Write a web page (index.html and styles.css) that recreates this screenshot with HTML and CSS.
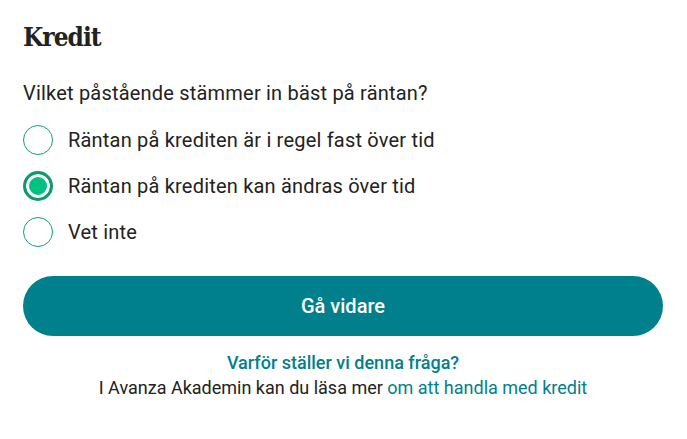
FILE: index.html
```html
<!DOCTYPE html>
<html lang="sv">
<head>
<meta charset="utf-8">
<link rel="stylesheet" href="styles.css">
</head>
<body>
<main class="card">
  <h1 class="title">Kredit</h1>
  <p class="question">Vilket påstående stämmer in bäst på räntan?</p>
  <div class="options">
    <label class="option"><span class="radio"></span><span>Räntan på krediten är i regel fast över tid</span></label>
    <label class="option"><span class="radio checked"></span><span>Räntan på krediten kan ändras över tid</span></label>
    <label class="option"><span class="radio"></span><span>Vet inte</span></label>
  </div>
  <button class="next">Gå vidare</button>
  <div class="info">
    <a class="why">Varför ställer vi denna fråga?</a>
    <p class="more">I Avanza Akademin kan du läsa mer <a class="link">om att handla med kredit</a></p>
  </div>
</main>
</body>
</html>
```
FILE: styles.css
```css
* { box-sizing: border-box; }
html, body { margin: 0; padding: 0; background: #fff; }
body { font-family: Roboto, "Liberation Sans", sans-serif; color: #222; }
.card { padding: 21px 24px 0 23px; display: flex; flex-direction: column; }
.title { font-family: "DejaVu Serif Condensed", "DejaVu Serif", serif; font-stretch: condensed; font-weight: 700; font-size: 26px; margin: 0; line-height: 32px; color: #222; letter-spacing: -1px; }
.question { margin: 28px 0 0; font-size: 20px; line-height: 24px; letter-spacing: 0.2px; }
.options { display: flex; flex-direction: column; gap: 16px; margin-top: 20px; }
.option { display: flex; align-items: center; gap: 15px; font-size: 20px; line-height: 30px; letter-spacing: 0.2px; }
.radio { width: 30px; height: 30px; border-radius: 50%; border: 1.5px solid #10a377; flex: none; background: #fff; }
.radio.checked { border: 3px solid #0f9a6e; background: #00c281; box-shadow: inset 0 0 0 3px #fff; }
.next { margin-top: 29px; height: 60px; border: none; border-radius: 30px; background: #00808d; color: #fff; font-family: Roboto, sans-serif; font-size: 20px; font-weight: 500; width: 100%; }
.info { text-align: center; margin-top: 14px; font-size: 18px; line-height: 25px; }
.why { display: block; color: #00808d; font-weight: 500; }
.more { margin: 0; }
.link { color: #00808d; }
```
